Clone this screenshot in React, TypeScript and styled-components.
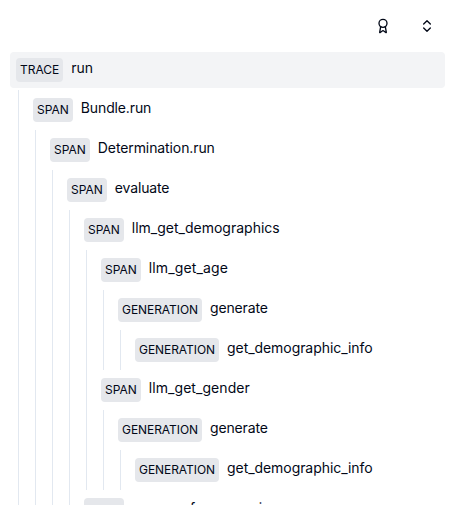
import React from "react";
import styled, { createGlobalStyle } from "styled-components";
import { Award, ChevronsUpDown } from "lucide-react";

interface TraceNode {
  kind: "TRACE" | "SPAN" | "GENERATION";
  name: string;
  tracking?: number;
  children?: TraceNode[];
}

const generation = (): TraceNode => ({
  kind: "GENERATION",
  name: "generate",
  tracking: -0.15,
  children: [{ kind: "GENERATION", name: "get_demographic_info", tracking: -0.06 }],
});

const trace: TraceNode = {
  kind: "TRACE",
  name: "run",
  tracking: -0.1,
  children: [
    {
      kind: "SPAN",
      name: "Bundle.run",
      tracking: -0.13,
      children: [
        {
          kind: "SPAN",
          name: "Determination.run",
          tracking: -0.1,
          children: [
            {
              kind: "SPAN",
              name: "evaluate",
              tracking: -0.15,
              children: [
                {
                  kind: "SPAN",
                  name: "llm_get_demographics",
                  children: [
                    { kind: "SPAN", name: "llm_get_age", tracking: 0.14, children: [generation()] },
                    { kind: "SPAN", name: "llm_get_gender", tracking: 0.06, children: [generation()] },
                  ],
                },
                { kind: "SPAN", name: "process_for_screening", tracking: -0.13 },
              ],
            },
          ],
        },
      ],
    },
  ],
};

const GlobalStyle = createGlobalStyle`
  *, *::before, *::after { box-sizing: border-box; }
  body {
    margin: 0;
    background: #fff;
    color: #020817;
    font-family: Inter, sans-serif;
    overflow: hidden;
  }
`;

const Panel = styled.main`
  height: 100vh;
  overflow: hidden;
  padding: 6px 15px 0 10px;
`;

const Toolbar = styled.header`
  display: flex;
  justify-content: flex-end;
  gap: 4px;
  height: 44px;
  padding-bottom: 4px;
  margin-right: -2px;
`;

const IconButton = styled.button`
  display: flex;
  align-items: center;
  justify-content: center;
  width: 40px;
  height: 40px;
  padding: 0;
  border: 0;
  background: transparent;
  color: inherit;
`;

const Row = styled.div<{ $selected?: boolean }>`
  display: flex;
  align-items: flex-start;
  gap: 8px;
  height: 36px;
  margin: 2px 0;
  padding: 6px;
  border-radius: 4px;
  background: ${({ $selected }) => ($selected ? "#f3f4f6" : "transparent")};
`;

const Node = styled.div`
  display: flow-root;
`;

const Kind = styled.span<{ $long: boolean }>`
  flex: none;
  height: 24px;
  padding: 0 4px;
  border-radius: 4px;
  background: #e5e7eb;
  font-size: 12px;
  line-height: 24px;
  letter-spacing: ${({ $long }) => ($long ? "-0.06px" : "normal")};
`;

const Name = styled.span<{ $tracking: number }>`
  font-size: 14px;
  line-height: 20px;
  letter-spacing: ${({ $tracking }) => $tracking}px;
  white-space: nowrap;
`;

const Children = styled.div`
  margin-left: 8px;
  padding-left: 8px;
  border-left: 1px solid #e2e8f0;
`;

function TreeNode({ node, selected }: { node: TraceNode; selected?: boolean }) {
  return (
    <Node>
      <Row $selected={selected}>
        <Kind $long={node.kind === "GENERATION"}>{node.kind}</Kind>
        <Name $tracking={node.tracking ?? 0}>{node.name}</Name>
      </Row>
      {node.children && (
        <Children>
          {node.children.map((child, index) => (
            <TreeNode key={index} node={child} />
          ))}
        </Children>
      )}
    </Node>
  );
}

export default function App() {
  return (
    <>
      <GlobalStyle />
      <Panel>
        <Toolbar>
          <IconButton aria-label="Scores">
            <Award size={16} />
          </IconButton>
          <IconButton aria-label="Expand or collapse all">
            <ChevronsUpDown size={16} />
          </IconButton>
        </Toolbar>
        <TreeNode node={trace} selected />
      </Panel>
    </>
  );
}
